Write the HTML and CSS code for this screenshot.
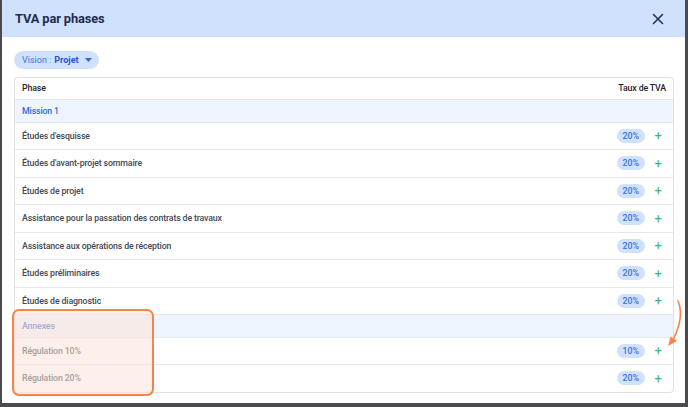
FILE: index.html
```html
<!DOCTYPE html>
<html lang="fr">
<head>
<meta charset="utf-8">
<link rel="stylesheet" href="styles.css">
</head>
<body>
<div class="modal">
  <div class="header">
    <h1 class="title">TVA par phases</h1>
    <svg class="close" width="12" height="12" viewBox="0 0 12 12"><path d="M1.5 1.5 L10.5 10.5 M10.5 1.5 L1.5 10.5" stroke="#22325a" stroke-width="1.6" stroke-linecap="round"/></svg>
  </div>
  <div class="body">
    <div class="chip">Vision : <b>Projet</b><svg class="caret" width="7" height="4" viewBox="0 0 7 4"><path d="M0 0 L7 0 L3.5 4 Z" fill="#2f66d8"/></svg></div>
    <div class="table">
      <div class="row head"><span>Phase</span><span>Taux de TVA</span></div>
      <div class="row group"><span>Mission 1</span></div>
      <div class="row item"><span>Études d'esquisse</span><span class="rate"><span class="badge">20%</span><span class="plus">+</span></span></div>
      <div class="row item"><span>Études d'avant-projet sommaire</span><span class="rate"><span class="badge">20%</span><span class="plus">+</span></span></div>
      <div class="row item"><span>Études de projet</span><span class="rate"><span class="badge">20%</span><span class="plus">+</span></span></div>
      <div class="row item"><span>Assistance pour la passation des contrats de travaux</span><span class="rate"><span class="badge">20%</span><span class="plus">+</span></span></div>
      <div class="row item"><span>Assistance aux opérations de réception</span><span class="rate"><span class="badge">20%</span><span class="plus">+</span></span></div>
      <div class="row item"><span>Études préliminaires</span><span class="rate"><span class="badge">20%</span><span class="plus">+</span></span></div>
      <div class="row item"><span>Études de diagnostic</span><span class="rate"><span class="badge">20%</span><span class="plus">+</span></span></div>
      <div class="row group annex"><span>Annexes</span></div>
      <div class="row item"><span>Régulation 10%</span><span class="rate"><span class="badge">10%</span><span class="plus">+</span></span></div>
      <div class="row item last"><span>Régulation 20%</span><span class="rate"><span class="badge">20%</span><span class="plus">+</span></span></div>
      <div class="highlight"></div>
      <svg class="arrow" width="20" height="50" viewBox="0 0 20 50"><path d="M13 1 C17 10 16 24 8 40" fill="none" stroke="#f5844c" stroke-width="1.6" stroke-linecap="round"/><path d="M3 46 L5.5 36.5 L12 41 Z" fill="#f5844c"/></svg>
    </div>
  </div>
</div>
</body>
</html>
```
FILE: styles.css
```css
html, body { margin: 0; padding: 0; }
body {
  background: #4b4b4d;
  width: 688px;
  height: 407px;
  overflow: hidden;
  font-family: Roboto, "Noto Sans", sans-serif;
}
.modal {
  margin: 0 3px 0 2px;
  height: 403px;
  background: #fff;
  overflow: hidden;
}
.header {
  height: 37px;
  background: #cfe1fb;
  display: flex;
  align-items: center;
  justify-content: space-between;
  padding: 0 21px 0 13px;
}
.title {
  margin: 0;
  font-size: 12.8px;
  font-weight: 700;
  color: #1e2c4e;
  letter-spacing: -0.1px;
}
.close { display: block; }
.body {
  padding: 14px 11px 0 12px;
}
.chip {
  display: flex;
  width: fit-content;
  align-items: center;
  height: 18px;
  padding: 0 7px 0 8px;
  border-radius: 9px;
  background: #cfe1fb;
  color: #3a72e0;
  font-size: 9px;
}
.chip b { color: #2457c9; font-weight: 700; margin-left: 3px; }
.caret { margin-left: 6px; }
.table {
  position: relative;
  margin-top: 8px;
  border: 1px solid #dfe1e5;
  border-radius: 4px;
}
.row {
  display: flex;
  justify-content: space-between;
  align-items: center;
  padding: 0 7px 0 7px;
  border-bottom: 1px solid #e7e8eb;
  font-size: 8.8px;
  font-weight: 500;
  letter-spacing: -0.15px;
  color: #444955;
}
.row.head { height: 20.5px; color: #1f2430; }
.row.group { height: 22px; background: #eef5fe; color: #2e6ae0; }
.row.item { height: 26.5px; padding-right: 11px; }
.row.last { border-bottom: none; }
.row.annex { height: 21.5px; }
.rate { display: flex; align-items: center; }
.badge {
  display: inline-block;
  height: 14px;
  line-height: 14px;
  padding: 0 6px;
  border-radius: 7px;
  background: #cfe1fb;
  color: #3a72e0;
  font-size: 8.8px;
  letter-spacing: 0;
}
.plus {
  margin-left: 9px;
  color: #3cb37a;
  font-size: 13px;
  font-weight: 400;
  line-height: 13px;
  width: 8px;
  text-align: center;
}
.highlight {
  position: absolute;
  left: -3px;
  top: 231px;
  width: 138px;
  height: 83px;
  border: 2px solid #f5844c;
  border-radius: 7px;
  background: rgba(251, 226, 215, 0.55);
}
.arrow {
  position: absolute;
  left: 650px;
  top: 222px;
}
```
